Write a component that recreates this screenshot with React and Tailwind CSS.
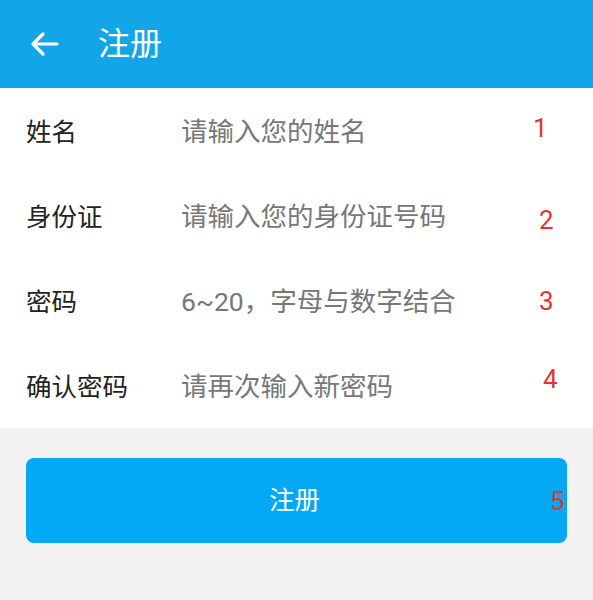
import React from "react";

const font = { fontFamily: 'Roboto, "Noto Sans CJK SC", sans-serif' };

const rows = [
  { label: "姓名", ph: "请输入您的姓名", n: "1", cls: "left-[533px] top-[27px]" },
  { label: "身份证", ph: "请输入您的身份证号码", n: "2", cls: "left-[539px] top-[34px]" },
  { label: "密码", ph: "6~20，字母与数字结合", n: "3", cls: "left-[539px] top-[30px]" },
  { label: "确认密码", ph: "请再次输入新密码", n: "4", cls: "left-[543px] top-[23px]" },
];

export default function App() {
  return (
    <div className="w-[593px] h-[600px] bg-[#f2f2f2] flex flex-col" style={font}>
      <div className="h-[88px] bg-[#12a6e8] flex items-center">
        <svg className="ml-[30px]" width="29" height="26" viewBox="0 0 29 26" fill="none" stroke="white" strokeWidth="3.2" strokeLinecap="round" strokeLinejoin="round">
          <path d="M27 13H3M13 3L3 13L13 23" />
        </svg>
        <span className="ml-[39px] text-white text-[32px] leading-none">注册</span>
      </div>
      <div className="bg-white flex flex-col">
        {rows.map((r) => (
          <div key={r.n} className="relative h-[85px] flex items-center pt-[3px]">
            <span className="ml-[26px] w-[155px] text-[25.5px] text-[#222]">{r.label}</span>
            <span className="text-[26.5px] text-[#777]">{r.ph}</span>
            <span className={"absolute text-[26px] leading-none text-[#e8322b] " + r.cls}>{r.n}</span>
          </div>
        ))}
      </div>
      <div className="relative mt-[30px] mx-[26px] h-[85px] rounded-[8px] bg-[#03a9f4] flex items-center justify-center">
        <span className="text-white text-[25.5px] -ml-[4px]">注册</span>
        <span className="absolute left-[524px] top-[30px] text-[26px] leading-none text-[#e8322b]">5</span>
      </div>
    </div>
  );
}
